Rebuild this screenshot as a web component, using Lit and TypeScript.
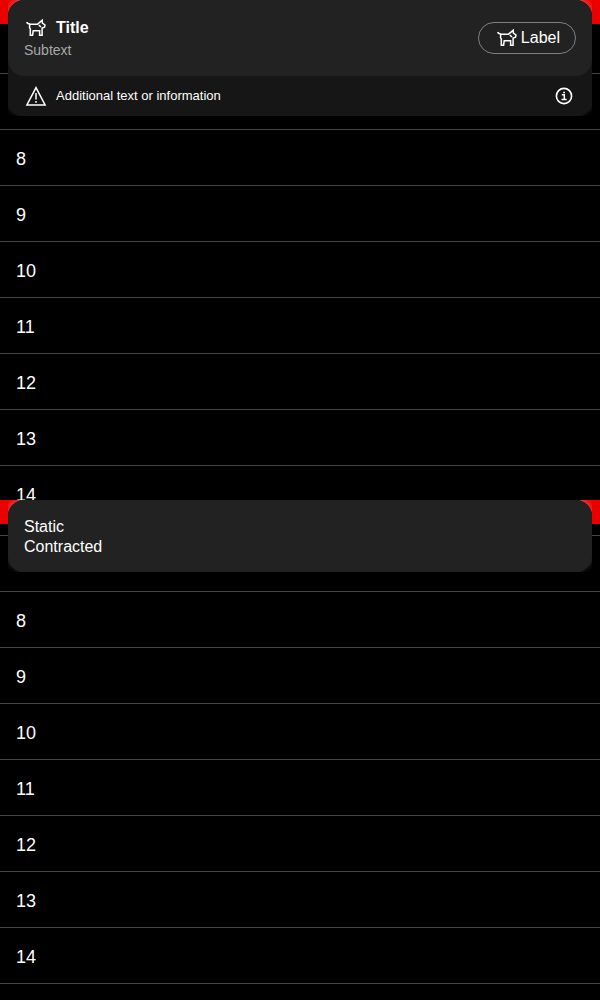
import { LitElement, html, css } from "lit";
import { customElement } from "lit/decorators.js";

@customElement("dog-icon")
class DogIcon extends LitElement {
  static styles = css`
    :host { display: block; width: 24px; height: 24px; flex: none; }
    svg { display: block; width: 100%; height: 100%; }
  `;
  render() {
    return html`<svg viewBox="0 0 24 24" aria-hidden="true">
      <path
        d="M2.5 6.2c.9 1.2 1.8 1.7 3.2 1.9l.6.1h7.2l4.7-3.9.2 2.9 2.6 1.8-.5 2.2-2.4.9v7.1h-2.5v-4.4H9.2l-.6 4.4H6.3v-6.2l-.8-1.4.2-3.4M14.8 9.2l2.2 1.7"
        fill="none" stroke="currentColor" stroke-width="1.5" stroke-linejoin="miter" stroke-linecap="butt"/>
    </svg>`;
  }
}

@customElement("app-root")
class AppRoot extends LitElement {
  static styles = css`
    :host {
      display: block;
      background: #000;
      color: #fff;
      font-family: "Liberation Sans", Arial, sans-serif;
    }
    *, *::before, *::after { box-sizing: border-box; }
    .screen {
      height: 50vh;
      overflow: hidden;
      display: grid;
      align-content: start;
      grid-template-columns: minmax(0, 1fr);
      grid-template-rows: 24px auto;
      background: #000;
    }
    .bar { grid-area: 1 / 1; background: #eb0000; }
    .header {
      grid-area: 1 / 1 / span 2 / auto;
      align-self: start;
      z-index: 1;
      margin: 0 8px;
      border-radius: 16px;
      background: #161616;
      box-shadow: 0 -2px 6px rgba(255, 255, 255, 0.3);
      clip-path: inset(0);
    }
    .panel {
      display: flex;
      align-items: center;
      justify-content: space-between;
      border-radius: 16px;
      background: #222;
    }
    .main { height: 76px; padding: 16px; }
    .static { padding: 17px 16px 15px; }
    .static p { font-size: 16px; line-height: 20px; }
    .heading { display: flex; align-items: center; gap: 8px; }
    h1 { margin: 0; font-size: 16px; line-height: 24px; font-weight: 700; }
    p { margin: 0; }
    .sub { font-size: 14px; line-height: 20px; color: #a8a8a8; }
    .chip {
      display: flex;
      align-items: center;
      gap: 2px;
      height: 32px;
      padding: 0 15px 0 16px;
      border: 1px solid #808080;
      border-radius: 16px;
      background: none;
      color: inherit;
      font: 16px/24px "Liberation Sans", Arial, sans-serif;
    }
    .info {
      display: flex;
      align-items: center;
      gap: 8px;
      height: 40px;
      padding: 0 16px;
      font-size: 13px;
      line-height: 20px;
    }
    .info p { flex: 1; }
    .icon { display: block; width: 24px; height: 24px; }
    .hint { padding: 0; border: 0; background: none; color: inherit; }
    .list {
      grid-area: 2 / 1;
      list-style: none;
      margin: 0;
      padding: 0;
    }
    .first .list { padding-top: 49px; }
    .second .list { padding-top: 11px; }
    .list::before, .list::after, li {
      display: block;
      height: 56px;
      padding: 0 16px;
      border-top: 1px solid #464646;
      font-size: 18px;
      line-height: 58px;
    }
    .list::before, .list::after { content: ""; }
  `;

  private rows(from: number, to: number) {
    return html`<ul class="list">
      ${Array.from({ length: to - from + 1 }, (_, i) => html`<li>${from + i}</li>`)}
    </ul>`;
  }

  render() {
    return html`
      <section class="screen first">
        <div class="bar"></div>
        <header class="header">
          <div class="panel main">
            <div>
              <div class="heading"><dog-icon></dog-icon><h1>Title</h1></div>
              <p class="sub">Subtext</p>
            </div>
            <button class="chip" type="button"><dog-icon></dog-icon>Label</button>
          </div>
          <div class="info">
            <svg class="icon" viewBox="0 0 24 24" aria-hidden="true">
              <path d="M12 3.6 2.9 21h18.2Z" fill="none" stroke="currentColor" stroke-width="1.5"/>
              <path d="M12 9v6.5M12 17v1.7" stroke="currentColor" stroke-width="1.5"/>
            </svg>
            <p>Additional text or information</p>
            <button class="hint" type="button" aria-label="More information">
              <svg class="icon" viewBox="0 0 24 24" aria-hidden="true">
                <circle cx="12" cy="12" r="7.6" fill="none" stroke="currentColor" stroke-width="1.6"/>
                <path d="M9.8 10.8h2.5v4.6M9.5 15.5h5.2M11.2 8.4h1.8" fill="none" stroke="currentColor" stroke-width="1.5"/>
              </svg>
            </button>
          </div>
        </header>
        ${this.rows(8, 14)}
      </section>
      <section class="screen second">
        <div class="bar"></div>
        <header class="header">
          <div class="panel static"><p>Static<br />Contracted</p></div>
        </header>
        ${this.rows(8, 14)}
      </section>
    `;
  }
}
